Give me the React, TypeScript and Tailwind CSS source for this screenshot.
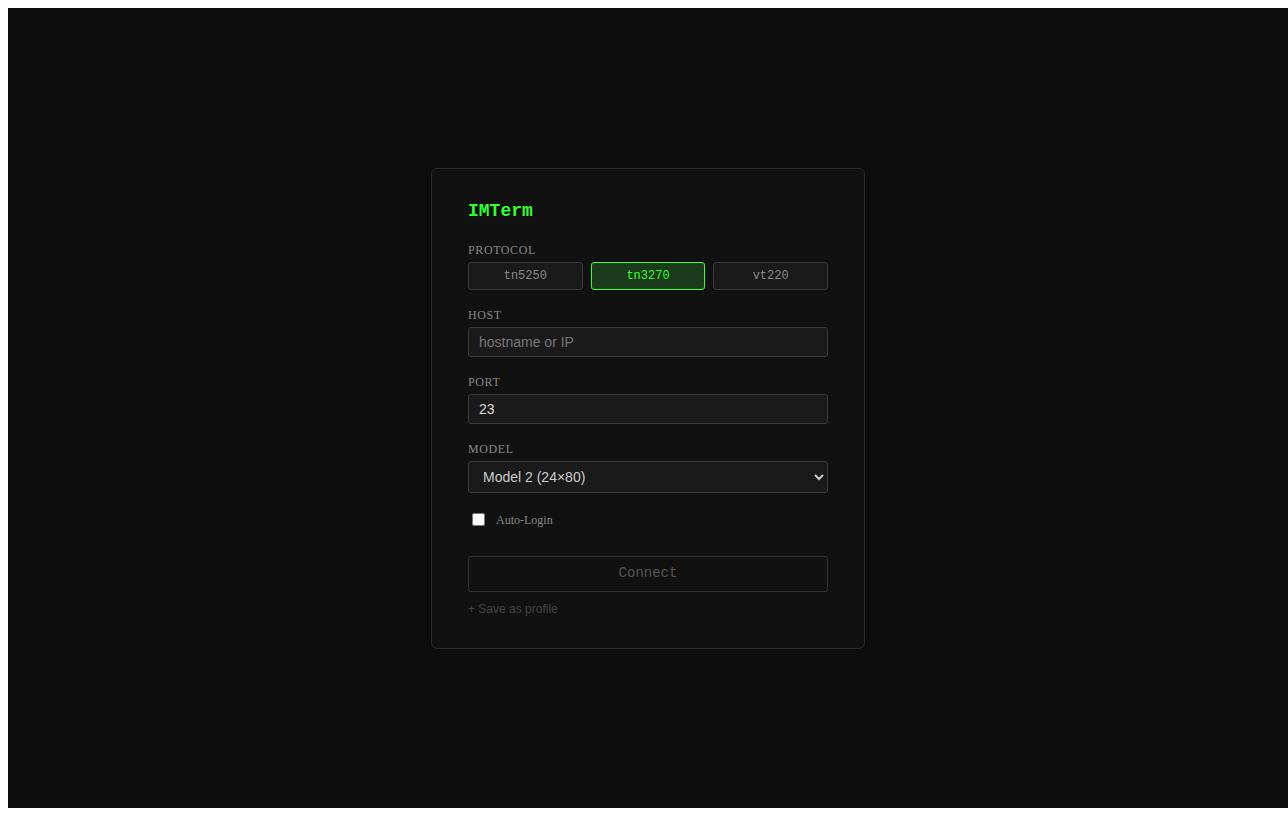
import React, { useState } from "react";

const label =
  "block font-['Liberation_Serif',serif] text-[12px] leading-[14px] tracking-[0.05em] uppercase text-[#888] mb-[5px]";
const mono = "font-['Liberation_Mono','Courier_New',monospace]";
const sans = "font-['Liberation_Sans',Arial,sans-serif]";

export default function App() {
  const [proto, setProto] = useState("tn3270");
  return (
    <div className="bg-white pt-2 pl-2 w-[1288px] h-[816px]">
      <div className="w-[1280px] h-[800px] bg-[#0d0d0d] flex items-center justify-center">
        <div className="w-[434px] bg-[#111111] border border-[#2a2a2a] rounded-[6px] px-[36px] pt-[30px] pb-[32px]">
          <h1 className={mono + " text-[18px] leading-[24px] font-bold text-[#33ff33] mb-[20px]"}>IMTerm</h1>

          <div className="mb-[18px]">
            <span className={label}>Protocol</span>
            <div className="grid grid-cols-3 gap-2">
              {["tn5250", "tn3270", "vt220"].map((p) => (
                <button
                  key={p}
                  onClick={() => setProto(p)}
                  className={
                    mono +
                    " h-[28px] rounded-[3px] border text-[12px] " +
                    (proto === p
                      ? "bg-[#1c3a1c] border-[#33ff33] text-[#33ff33]"
                      : "bg-[#1a1a1a] border-[#3a3a3a] text-[#888]")
                  }
                >
                  {p}
                </button>
              ))}
            </div>
          </div>

          <div className="mb-[18px]">
            <span className={label}>Host</span>
            <input
              placeholder="hostname or IP"
              className={
                sans +
                " w-full h-[30px] bg-[#1a1a1a] border border-[#3a3a3a] rounded-[3px] px-[10px] text-[14px] text-[#ddd] placeholder:text-[#777] outline-none"
              }
            />
          </div>

          <div className="mb-[18px]">
            <span className={label}>Port</span>
            <input
              defaultValue="23"
              className={
                sans +
                " w-full h-[30px] bg-[#1a1a1a] border border-[#3a3a3a] rounded-[3px] px-[10px] text-[14px] text-[#ddd] outline-none"
              }
            />
          </div>

          <div className="mb-[18px]">
            <span className={label}>Model</span>
            <select
              defaultValue="2"
              className={
                sans +
                " appearance-auto w-full h-[32px] bg-[#1a1a1a] border border-[#3a3a3a] rounded-[3px] px-[10px] text-[14px] text-[#ccc] outline-none"
              }
            >
              <option value="2">Model 2 (24×80)</option>
              <option value="3">Model 3 (32×80)</option>
              <option value="4">Model 4 (43×80)</option>
              <option value="5">Model 5 (27×132)</option>
            </select>
          </div>

          <label className="flex items-center gap-[11px] mb-[27px]">
            <input type="checkbox" className="appearance-auto ml-[4px] w-[13px] h-[13px]" />
            <span className="font-['Liberation_Serif',serif] text-[12px] text-[#888]">Auto-Login</span>
          </label>

          <button
            className={
              mono +
              " w-full h-[36px] border border-[#333] rounded-[3px] bg-transparent text-[14px] text-[#555]"
            }
          >
            Connect
          </button>

          <div className={sans + " mt-[10px] text-[12px] leading-[14px] text-[#444]"}>+ Save as profile</div>
        </div>
      </div>
    </div>
  );
}
